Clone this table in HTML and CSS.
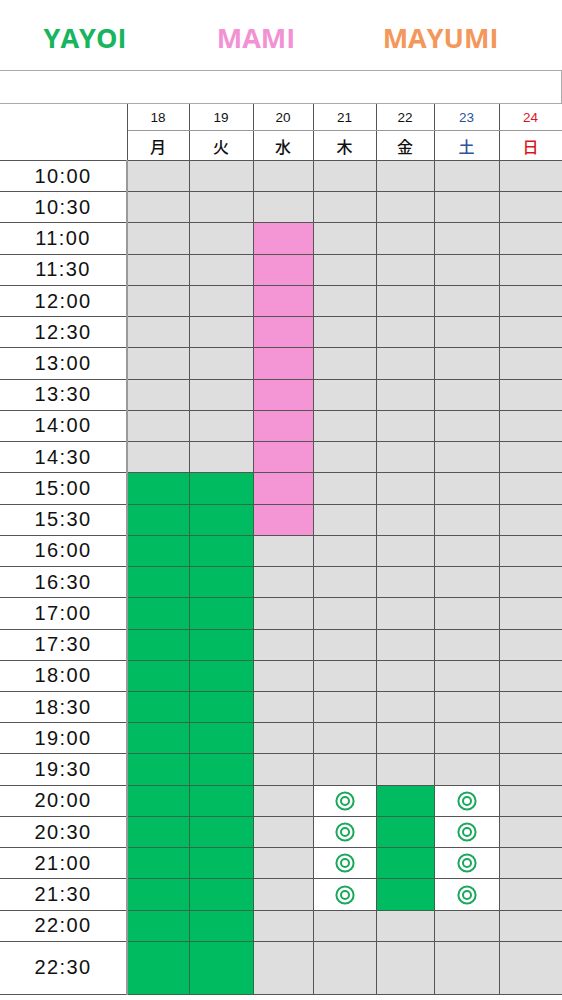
FILE: index.html
```html
<!DOCTYPE html>
<html lang="ja">
<head>
    <meta charset="UTF-8">
    <meta name="viewport" content="width=device-width, initial-scale=1.0">
    <title>Shift</title>
    <link rel="stylesheet" href="styles.css">
</head>
<body>
    <div class="names">
        <span class="name yayoi">YAYOI</span>
        <span class="name mami">MAMI</span>
        <span class="name mayumi">MAYUMI</span>
    </div>
    <div class="blank-row"></div>
    <table class="schedule">
        <colgroup>
            <col class="col-time">
            <col style="width:62px">
            <col style="width:64px">
            <col style="width:60px">
            <col style="width:63px">
            <col style="width:58px">
            <col style="width:65px">
            <col style="width:63px">
        </colgroup>
        <thead>
            <tr class="date-row">
                <td class="corner" rowspan="2"></td>
                <td>18</td><td>19</td><td>20</td><td>21</td><td>22</td>
                <td class="sat">23</td><td class="sun">24</td>
            </tr>
            <tr class="day-row">
                <td>月</td><td>火</td><td>水</td><td>木</td><td>金</td>
                <td class="sat">土</td><td class="sun">日</td>
            </tr>
        </thead>
        <tbody id="rows"></tbody>
    </table>

    <script>
        document.addEventListener('DOMContentLoaded', () => {
            const rows = document.getElementById('rows');
            const times = [];
            for (let h = 10; h <= 22; h++) {
                times.push(h + ':00', h + ':30');
            }

            // which slots are filled, per weekday column
            const between = (i, a, b) => i >= a && i <= b;
            const slot = (day, i) => {
                if (day === 0 || day === 1) return i >= 10 ? 'yayoi' : '';
                if (day === 2) return between(i, 2, 11) ? 'mami' : '';
                if (day === 3 || day === 5) return between(i, 20, 23) ? 'ok' : '';
                if (day === 4) return between(i, 20, 23) ? 'yayoi' : '';
                return '';
            };

            const mark = '<svg width="20" height="20" viewBox="0 0 20 20"><circle cx="10" cy="10" r="8.6" fill="none" stroke="#1aa85c" stroke-width="2"/><circle cx="10" cy="10" r="4" fill="none" stroke="#1aa85c" stroke-width="2"/></svg>';

            times.forEach((time, i) => {
                const tr = document.createElement('tr');
                if (i === times.length - 1) tr.className = 'last';
                const th = document.createElement('td');
                th.className = 'time';
                th.textContent = time;
                tr.appendChild(th);
                for (let d = 0; d < 7; d++) {
                    const td = document.createElement('td');
                    const s = slot(d, i);
                    td.className = 'cell ' + s;
                    if (s === 'ok') td.innerHTML = mark;
                    tr.appendChild(td);
                }
                rows.appendChild(tr);
            });
        });
    </script>
</body>
</html>
```

FILE: styles.css
```css
body {
    margin: 0;
    padding: 0;
    background-color: #ffffff;
    font-family: 'Liberation Sans', 'Noto Sans CJK JP', sans-serif;
    color: #111111;
}
.names {
    display: flex;
    height: 70px;
    align-items: center;
}
.name {
    font-family: 'Open Sans', sans-serif;
    font-weight: 700;
    font-size: 27px;
    text-align: center;
    padding-top: 5px;
}
.yayoi {
    width: 170px;
    color: #16b55e;
}
.mami {
    width: 172px;
    color: #f292d4;
}
.mayumi {
    width: 197px;
    color: #f4975b;
}
.blank-row {
    box-sizing: border-box;
    width: 562px;
    height: 34px;
    border: 1px solid #aaaaaa;
    border-left: none;
}
.schedule {
    border-collapse: collapse;
    table-layout: fixed;
    width: 562px;
}
.col-time {
    width: 127px;
}
.schedule td {
    padding: 0;
    border: 1px solid #555555;
    text-align: center;
}
.date-row td {
    height: 26px;
    font-size: 13.5px;
    border-top: none;
    border-bottom-color: #999999;
}
.day-row td {
    height: 29px;
    font-family: 'Noto Sans CJK JP', sans-serif;
    font-size: 16px;
    font-weight: 500;
    border-top-color: #999999;
}
.date-row td.corner {
    border-left: none;
    border-bottom-color: #555555;
}
.sat {
    color: #2b5596;
}
.sun {
    color: #d9161f;
}
.schedule td.time {
    height: 30.24px;
    font-size: 20px;
    letter-spacing: 1.4px;
    border-left: none;
    border-right: 2px solid #9a9a9a;
    background-color: #ffffff;
}
.last td.time {
    height: 52px;
}
.cell {
    background-color: #dedede;
}
.cell.yayoi {
    background-color: #00bb5f;
    border-color: #2f6b45;
}
.cell.mami {
    background-color: #f495d6;
}
.cell.ok {
    background-color: #ffffff;
}
.cell svg {
    display: block;
    margin: 0 auto;
}
```
